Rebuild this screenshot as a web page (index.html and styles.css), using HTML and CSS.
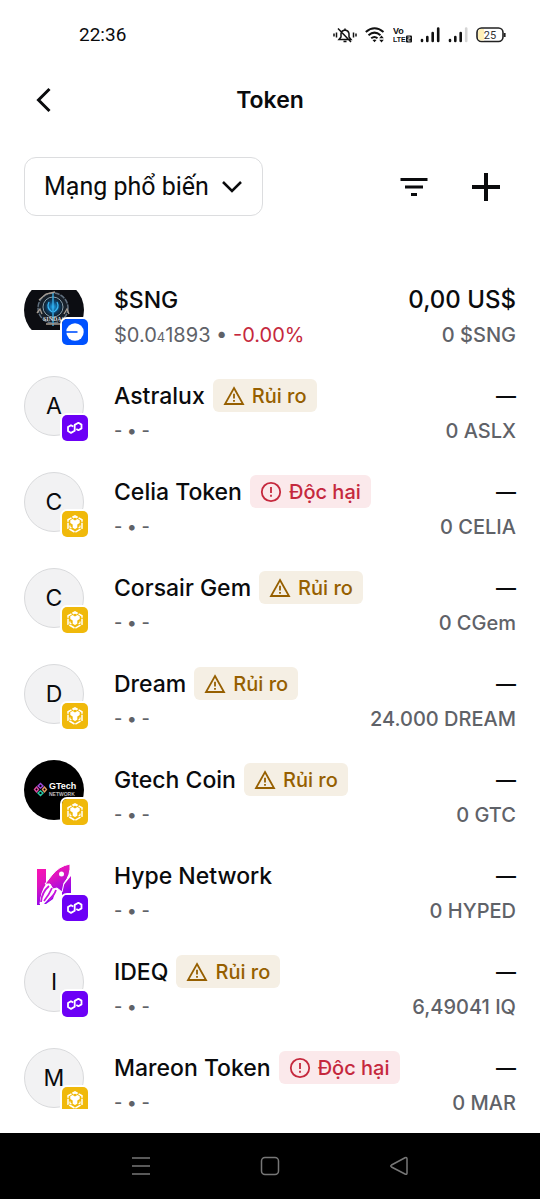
FILE: index.html
```html
<!DOCTYPE html>
<html lang="vi">
<head>
<meta charset="utf-8">
<meta name="viewport" content="width=device-width, initial-scale=1">
<title>Token</title>
<link rel="stylesheet" href="styles.css">
</head>
<body>
<svg class="sprite" aria-hidden="true">
  <symbol id="polygon" viewBox="0 0 26 26">
    <rect width="26" height="26" fill="#6c00f6"/>
    <path d="M11.300 11.500 L9 10.200 L6 12 V16 L9 17.900 L12.700 15.800 V9.900 L16.400 7.800 L19.500 9.600 V13.400 L16.400 15.200 L14.300 14" fill="none" stroke="#fff" stroke-width="1.800" stroke-linejoin="round"/>
  </symbol>
  <symbol id="bnb" viewBox="0 0 26 26">
    <rect width="26" height="26" fill="#f0b90b"/>
    <path d="M10.500 6.200 L13 4.800 L20 8.800 V17.200 L13 21.300 L6 17.200 V8.800 L10.500 6.200" fill="none" stroke="#fff" stroke-width="1.500" stroke-dasharray="6 1"/>
    <path d="M8.300 9.300 L10.600 8 L13 9.400 L15.400 8 L17.700 9.300 V12 L15.300 13.500 V16.700 L13 18 L10.700 16.700 V13.500 L8.300 12 Z" fill="#fff"/>
    <path d="M8 14.500 V16.200 L9.500 17.100 M18 14.500 V16.200 L16.500 17.100 M11 7 L13 6 L15 7" fill="none" stroke="#fff" stroke-width="1.200"/>
  </symbol>
  <symbol id="base" viewBox="0 0 26 26">
    <rect width="26" height="26" fill="#0052ff"/>
    <circle cx="13" cy="13" r="8.700" fill="#fff"/>
    <rect x="3.500" y="12.200" width="12" height="1.600" fill="#0052ff"/>
  </symbol>
  <symbol id="risk" viewBox="0 0 22 22">
    <path d="M11 3 L20 19 H2 Z" fill="none" stroke="currentColor" stroke-width="1.800"/>
    <path d="M11 8.800 V13.500 M11 14.900 V16.700" stroke="currentColor" stroke-width="1.800"/>
  </symbol>
  <symbol id="toxic" viewBox="0 0 22 22">
    <circle cx="11" cy="11" r="9.200" fill="none" stroke="currentColor" stroke-width="1.800"/>
    <path d="M11 6 V12 M11 13.800 V15.800" stroke="currentColor" stroke-width="1.800"/>
  </symbol>
</svg>

<div class="screen">
  <div class="status">
    <time class="clock">22:36</time>
    <div class="status-icons">
      <svg width="24" height="20" viewBox="0 0 24 20" fill="none" stroke="#111" stroke-width="1.500"><path d="M6 14.500 H18 L16 12 V8.500 Q15.500 5.500 12 5 Q8.500 5.500 8 8.500 V12 Z M12 3.500 V5 M10.500 16.500 H13.500 M5 3.500 L18 17 M3.500 7.500 V12.500 M1 8.500 V11.500 M20.500 7.500 V12.500 M23 8.500 V11.500"/></svg>
      <svg width="20" height="20" viewBox="0 0 20 20" fill="none" stroke="#111" stroke-width="2"><path d="M.8 7 Q9.500 -.5 18.500 7 M3.500 10.200 Q9.500 5 15.500 10.200 M6.200 13.300 Q9.500 10.700 12.500 13.300"/><path d="M7.500 15 L9.500 17.200 L11.500 15 Q9.500 13.800 7.500 15 Z M14.200 13.300 L16.500 10.500 L18.800 13.300 Z M14.200 14.800 L16.500 17.600 L18.800 14.800 Z" fill="#111" stroke="none"/></svg>
      <svg width="19" height="20" viewBox="0 0 19 20"><text class="volte" x="0" y="9">Vo</text><text class="lte" x="0" y="17">LTE</text><rect x="13" y="10.500" width="6" height="7" rx="1" fill="#111"/><path d="M14.500 12 H17 V13.800 H15 V16 H17.500" fill="none" stroke="#fff" stroke-width=".8"/></svg>
      <svg width="20" height="20" viewBox="0 0 20 20" fill="none" stroke="#111" stroke-width="2.600" stroke-linecap="round"><path d="M2 16 V15 M7.300 16 V12 M12.700 16 V8 M18.200 16 V3.500"/></svg>
      <svg width="20" height="20" viewBox="0 0 20 20" fill="none" stroke="#111" stroke-width="2.600" stroke-linecap="round"><path d="M2 16 V15 M7.300 16 V12 M12.700 16 V8"/><path d="M18.200 16 V3.500" stroke="#d4d4d4"/></svg>
      <svg width="30" height="20" viewBox="0 0 30 20"><rect x="1" y="3" width="26" height="13.500" rx="4.500" fill="#fff" stroke="#222" stroke-width="1.600"/><path d="M8 4 H5 Q2 4 2 8 V11.500 Q2 15.500 5 15.500 H8 Z" fill="#fff0b8"/><path d="M28.700 8 V12" stroke="#222" stroke-width="1.800"/><text class="battery" x="14" y="14">25</text></svg>
    </div>
  </div>

  <header class="header">
    <button class="icon-button" type="button" aria-label="Quay lại"><svg width="40" height="40" viewBox="0 0 40 40" fill="none" stroke="#0a0b0d" stroke-width="3"><path d="M25.500 9 L14.500 20 L25.500 31"/></svg></button>
    <h1 class="title">Token</h1>
  </header>

  <div class="toolbar">
    <div class="network">
      <select class="network-select" aria-label="Mạng"><option>Mạng phổ biến</option></select>
      <svg class="chevron" width="22" height="14" viewBox="0 0 22 14" fill="none" stroke="#0a0b0d" stroke-width="2.500"><path d="M2 2 L11 11 L20 2"/></svg>
    </div>
    <div class="actions">
      <button class="icon-button" type="button" aria-label="Lọc"><svg width="40" height="40" viewBox="0 0 40 40" stroke="#0a0b0d" stroke-width="3"><path d="M6.500 12.500 H33.500 M11 20 H29 M17 27.500 H23"/></svg></button>
      <button class="icon-button" type="button" aria-label="Thêm"><svg width="40" height="40" viewBox="0 0 40 40" stroke="#0a0b0d" stroke-width="4"><path d="M6 20 H34 M20 6 V34"/></svg></button>
    </div>
  </div>

  <main class="content">
    <ul class="tokens">
      <li class="token">
        <div class="avatar"><svg width="60" height="60" viewBox="0 0 60 60">
          <defs><clipPath id="coin"><circle cx="30" cy="30" r="30"/></clipPath><radialGradient id="glow"><stop offset="0" stop-color="#20a8f0"/><stop offset=".5" stop-color="#104a78"/><stop offset="1" stop-color="#101820"/></radialGradient></defs>
          <g clip-path="url(#coin)"><rect y="10" width="60" height="40" fill="#0c0d12"/>
          <circle cx="29" cy="28" r="15" fill="#182029" stroke="#627180" stroke-width="1.500" stroke-dasharray="5 1"/>
          <circle cx="29" cy="27" r="10" fill="url(#glow)" stroke="#8aa0ae"/>
          <path d="M29 13 V46 M25 22 Q22 28 28 32 M33 22 Q36 28 30 32" fill="none" stroke="#38b5f2" stroke-width="1.300"/>
          <path d="M15 20 L22 14 L31 12 M13 33 L16 29 L18 34 M40 34 L43 29 L45 34 M22 44 H36" fill="none" stroke="#a69c91" stroke-width="1.300"/>
          <text class="coin-text" x="30" y="41">SINDAS</text></g></svg>
          <svg class="chain" viewBox="0 0 26 26"><use href="#base"/></svg></div>
        <div class="info"><div class="line"><span class="name">$SNG</span></div><div class="sub">$0.0<span class="small">4</span>1893 • <span class="down">-0.00%</span></div></div>
        <div class="amount"><div class="line value">0,00 US$</div><div class="sub">0 $SNG</div></div>
      </li>
      <li class="token">
        <div class="avatar letter">A<svg class="chain" viewBox="0 0 26 26"><use href="#polygon"/></svg></div>
        <div class="info"><div class="line"><span class="name">Astralux</span><span class="tag risk"><svg width="22" height="22"><use href="#risk"/></svg>Rủi ro</span></div><div class="sub empty">- • -</div></div>
        <div class="amount"><div class="line">—</div><div class="sub">0 ASLX</div></div>
      </li>
      <li class="token">
        <div class="avatar letter">C<svg class="chain" viewBox="0 0 26 26"><use href="#bnb"/></svg></div>
        <div class="info"><div class="line"><span class="name">Celia Token</span><span class="tag toxic"><svg width="22" height="22"><use href="#toxic"/></svg>Độc hại</span></div><div class="sub empty">- • -</div></div>
        <div class="amount"><div class="line">—</div><div class="sub">0 CELIA</div></div>
      </li>
      <li class="token">
        <div class="avatar letter">C<svg class="chain" viewBox="0 0 26 26"><use href="#bnb"/></svg></div>
        <div class="info"><div class="line"><span class="name">Corsair Gem</span><span class="tag risk"><svg width="22" height="22"><use href="#risk"/></svg>Rủi ro</span></div><div class="sub empty">- • -</div></div>
        <div class="amount"><div class="line">—</div><div class="sub">0 CGem</div></div>
      </li>
      <li class="token">
        <div class="avatar letter">D<svg class="chain" viewBox="0 0 26 26"><use href="#bnb"/></svg></div>
        <div class="info"><div class="line"><span class="name">Dream</span><span class="tag risk"><svg width="22" height="22"><use href="#risk"/></svg>Rủi ro</span></div><div class="sub empty">- • -</div></div>
        <div class="amount"><div class="line">—</div><div class="sub">24.000 DREAM</div></div>
      </li>
      <li class="token">
        <div class="avatar"><svg width="60" height="60" viewBox="0 0 60 60"><circle cx="30" cy="30" r="30"/>
          <g fill="none" stroke-width="1.400"><path d="M14 26 L16.500 23.500 L19 26 L16.500 28 Z" stroke="#a04be0"/><path d="M18.500 29.500 L20.500 27 L22.500 29.500 L20.500 32 Z" stroke="#e39a66"/><path d="M10.500 29.500 L12.500 27 L14.500 29.500 L12.500 32 Z" stroke="#e04aa5"/><path d="M14 33 L16.500 31 L19 33 L16.500 35.500 Z" stroke="#2bc7a4"/></g>
          <text class="gtech" x="25" y="29">GTech</text><text class="gtech-sub" x="25" y="36">NETWORK</text></svg>
          <svg class="chain" viewBox="0 0 26 26"><use href="#bnb"/></svg></div>
        <div class="info"><div class="line"><span class="name">Gtech Coin</span><span class="tag risk"><svg width="22" height="22"><use href="#risk"/></svg>Rủi ro</span></div><div class="sub empty">- • -</div></div>
        <div class="amount"><div class="line">—</div><div class="sub">0 GTC</div></div>
      </li>
      <li class="token">
        <div class="avatar"><svg width="60" height="60" viewBox="0 0 60 60">
          <defs><linearGradient id="hype" gradientUnits="userSpaceOnUse" x1="15" y1="10" x2="36" y2="48"><stop offset="0" stop-color="#ff12b0"/><stop offset=".4" stop-color="#dc14c0"/><stop offset="1" stop-color="#7200ff"/></linearGradient></defs>
          <path d="M13 13 H22 V28 Q16 36 16 49 H13 Z M38 31 L47 20 V40 H38 Z M20 48 L31 36 L29 43 L22 48 Z" fill="url(#hype)"/>
          <path d="M46 8 Q47 19 40 27 L38 36 L33 32 L29 33 L26 28 L21 28 L28 19 Q35 10 46 8 Z" fill="url(#hype)" stroke="#fff" stroke-width="1"/>
          <circle cx="37.500" cy="18" r="2.500" fill="#fff"/>
          <path d="M25 29 Q18 36 17 48" fill="none" stroke="#fff" stroke-width="3"/>
          <path d="M25 30 Q18 36 17 46 M28 32 Q25 39 20 45 M32 34 Q30 40 25 44" fill="none" stroke="#c814dd" stroke-width="1.800"/></svg>
          <svg class="chain" viewBox="0 0 26 26"><use href="#polygon"/></svg></div>
        <div class="info"><div class="line"><span class="name">Hype Network</span></div><div class="sub empty">- • -</div></div>
        <div class="amount"><div class="line">—</div><div class="sub">0 HYPED</div></div>
      </li>
      <li class="token">
        <div class="avatar letter">I<svg class="chain" viewBox="0 0 26 26"><use href="#polygon"/></svg></div>
        <div class="info"><div class="line"><span class="name">IDEQ</span><span class="tag risk"><svg width="22" height="22"><use href="#risk"/></svg>Rủi ro</span></div><div class="sub empty">- • -</div></div>
        <div class="amount"><div class="line">—</div><div class="sub">6,49041 IQ</div></div>
      </li>
      <li class="token">
        <div class="avatar letter">M<svg class="chain" viewBox="0 0 26 26"><use href="#bnb"/></svg></div>
        <div class="info"><div class="line"><span class="name">Mareon Token</span><span class="tag toxic"><svg width="22" height="22"><use href="#toxic"/></svg>Độc hại</span></div><div class="sub empty">- • -</div></div>
        <div class="amount"><div class="line">—</div><div class="sub">0 MAR</div></div>
      </li>
    </ul>
  </main>

  <nav class="system-nav" aria-label="Hệ thống">
    <button class="nav-button" type="button" aria-label="Gần đây"><svg width="20" height="20" viewBox="0 0 20 20"><path d="M1 2 H19 M1 10 H19 M1 18 H19"/></svg></button>
    <button class="nav-button" type="button" aria-label="Trang chủ"><svg width="20" height="20" viewBox="0 0 20 20"><rect x="1.500" y="1.500" width="17" height="17" rx="3.500"/></svg></button>
    <button class="nav-button" type="button" aria-label="Trở về"><svg width="20" height="20" viewBox="0 0 20 20"><path d="M2.500 9 L16 1.800 Q18 1 18 3 V17 Q18 19 16 18 L2.500 11 Q1 10 2.500 9 Z"/></svg></button>
  </nav>
</div>
</body>
</html>
```
FILE: styles.css
```css
* { box-sizing: border-box; }
body { margin: 0; background: #fff; color: #0a0b0d; font-family: Inter, "Liberation Sans", sans-serif; }
button { border: 0; padding: 0; background: none; }
svg { display: block; flex: none; }
.sprite { position: absolute; width: 0; height: 0; }
.screen { display: flex; flex-direction: column; height: 100vh; }

.status { display: flex; align-items: center; justify-content: space-between; height: 68px; padding: 1px 34px 0 79px; }
.clock { font: 19px Roboto, sans-serif; }
.status-icons { display: flex; align-items: center; gap: 8px; }
.volte { font: bold 9px "Liberation Sans", sans-serif; fill: #111; }
.lte { font: bold 7px "Liberation Sans", sans-serif; fill: #111; }
.battery { font: 11px Roboto, sans-serif; text-anchor: middle; fill: #333; }

.header { display: grid; grid-template-columns: 40px 1fr 40px; align-items: center; height: 64px; padding: 0 24px; }
.title { margin: 0; font-size: 23px; font-weight: 600; text-align: center; }
.icon-button { width: 40px; height: 40px; }

.toolbar { display: flex; align-items: center; justify-content: space-between; padding: 25px 34px 52px 24px; }
.network { position: relative; }
.network-select { width: 239px; height: 59px; padding: 0 48px 0 19px; appearance: none; background: #fff; border: 1px solid #dcdddf; border-radius: 12px; color: inherit; font: 25px Roboto, sans-serif; }
.chevron { position: absolute; right: 20px; top: 23px; pointer-events: none; }
.actions { display: flex; gap: 32px; }

.content { flex: 1; min-height: 0; overflow: hidden; }
.tokens { margin: 0; padding: 0; list-style: none; }
.token { display: flex; height: 96px; padding: 12px 24px 0; }
.avatar { position: relative; flex: none; width: 60px; height: 60px; margin-right: 30px; border-radius: 50%; }
.letter { display: flex; align-items: center; justify-content: center; background: #f2f2f3; border: 1px solid #d9dadc; font-size: 23px; }
.chain { position: absolute; left: 36px; top: 37px; width: 30px; height: 30px; border: 2px solid #fff; border-radius: 7px; }
.letter .chain { left: 35px; top: 36px; }
.token:last-child .avatar { clip-path: inset(0 -8px -1px 0); }
.info { flex: 1; min-width: 0; }
.line { display: flex; align-items: center; height: 33px; margin-top: 3px; font-size: 23px; font-weight: 450; white-space: nowrap; }
.amount .line { justify-content: flex-end; font-size: 20px; }
.amount .value { font-size: 24px; }
.sub { height: 28px; margin-top: 5px; font-size: 20px; line-height: 28px; color: #5f6268; white-space: nowrap; }
.amount .sub { font-weight: 500; text-align: right; }
.empty { font-size: 18px; font-weight: 500; }
.small { font-size: 13px; }
.down { color: #c5283d; }
.tag { display: flex; align-items: center; gap: 7px; height: 33px; margin-left: 8px; padding: 0 10px; border-radius: 6px; font-size: 20px; font-weight: 500; }
.risk { background: #f5efe4; color: #965f00; }
.toxic { background: #fbe9eb; color: #c5283d; }
.coin-text { font: bold 6px "Liberation Serif", serif; text-anchor: middle; fill: #ddd; }
.gtech { font: bold 9px "Liberation Sans", sans-serif; fill: #fff; }
.gtech-sub { font: bold 5px "Liberation Sans", sans-serif; fill: #bbb; }

.system-nav { display: flex; align-items: center; justify-content: center; gap: 89px; height: 66px; background: #000; }
.nav-button { width: 40px; height: 40px; display: grid; place-items: center; }
.nav-button svg { fill: none; stroke: #777; stroke-width: 1.5px; }
```
